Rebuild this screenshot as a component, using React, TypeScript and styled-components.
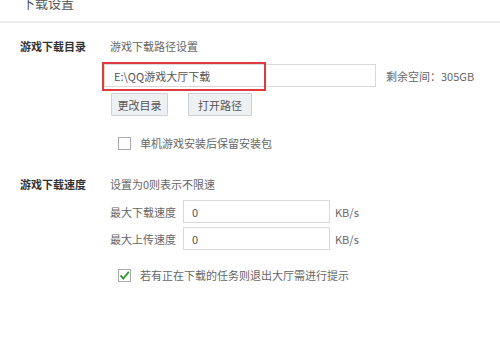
import React from "react";
import styled, { createGlobalStyle } from "styled-components";

const Global = createGlobalStyle`
  html, body { margin: 0; padding: 0; background: #fff; }
  body { font-family: "Noto Sans CJK SC", "Noto Sans", sans-serif; }
  * { box-sizing: border-box; }
`;

const Page = styled.div`
  width: 500px;
  height: 347px;
  background: #fff;
  overflow: hidden;
  color: #666;
  font-size: 11px;
`;

const Header = styled.div`
  height: 23px;
  border-bottom: 2px solid #ececec;
  padding-left: 22px;
  overflow: hidden;
`;

const Title = styled.div`
  font-size: 13px;
  line-height: 16px;
  margin-top: -5px;
  color: #555;
`;

const Section = styled.div<{ $top: number }>`
  display: grid;
  grid-template-columns: 90px 1fr;
  padding-left: 20px;
  padding-top: ${(p) => p.$top}px;
`;

const Label = styled.div`
  font-weight: bold;
  color: #333;
  line-height: 16px;
  font-size: 11px;
`;

const Column = styled.div`
  display: flex;
  flex-direction: column;
`;

const Line = styled.div`
  line-height: 16px;
  color: #666;
`;

const PathRow = styled.div`
  display: flex;
  align-items: center;
  margin-top: 10px;
  margin-left: -6px;
`;

const PathBox = styled.div`
  position: relative;
  width: 272px;
  height: 23px;
  border: 1px solid #d9d9d9;
  display: flex;
  align-items: center;
  padding-left: 9px;
  color: #555;
`;

const Highlight = styled.div`
  position: absolute;
  left: -3px;
  top: -3px;
  width: 164px;
  height: 29px;
  border: 2px solid #de3a3f;
  pointer-events: none;
`;

const Side = styled.span`
  margin-left: 10px;
  color: #666;
`;

const Buttons = styled.div`
  display: flex;
  gap: 20px;
  margin-top: 6px;
  margin-left: 1px;
`;

const Button = styled.div<{ $w: number }>`
  width: ${(p) => p.$w}px;
  height: 23px;
  border: 1px solid #cdd1d6;
  background: #eef1f4;
  border-radius: 1px;
  display: flex;
  align-items: center;
  justify-content: center;
  color: #555;
`;

const CheckRow = styled.div<{ $top: number }>`
  display: flex;
  align-items: center;
  gap: 9px;
  margin-top: ${(p) => p.$top}px;
  margin-left: 8px;
  line-height: 16px;
`;

const Box = styled.div`
  width: 13px;
  height: 13px;
  border: 1px solid #a9a9a9;
  background: #fff;
  display: flex;
  align-items: center;
  justify-content: center;
`;

const SpeedRow = styled.div<{ $top: number }>`
  display: flex;
  align-items: center;
  margin-top: ${(p) => p.$top}px;
`;

const SpeedLabel = styled.span`
  width: 73px;
  color: #666;
`;

const SpeedInput = styled.div`
  width: 147px;
  height: 23px;
  border: 1px solid #d9d9d9;
  display: flex;
  align-items: center;
  padding-left: 8px;
  color: #555;
`;

const Unit = styled.span`
  margin-left: 5px;
  color: #666;
`;

const Check = () => (
  <svg width="11" height="11" viewBox="0 0 11 11">
    <path d="M1.5 5.5 L4.3 8.5 L9.8 1.8" fill="none" stroke="#3c9a3a" strokeWidth="1.9" />
  </svg>
);

export default function App() {
  return (
    <Page>
      <Global />
      <Header>
        <Title>下载设置</Title>
      </Header>
      <Section $top={15}>
        <Label>游戏下载目录</Label>
        <Column>
          <Line>游戏下载路径设置</Line>
          <PathRow>
            <PathBox>
              E:\QQ游戏大厅下载
              <Highlight />
            </PathBox>
            <Side>剩余空间：305GB</Side>
          </PathRow>
          <Buttons>
            <Button $w={57}>更改目录</Button>
            <Button $w={64}>打开路径</Button>
          </Buttons>
          <CheckRow $top={19}>
            <Box />
            <span>单机游戏安装后保留安装包</span>
          </CheckRow>
        </Column>
      </Section>
      <Section $top={25}>
        <Label>游戏下载速度</Label>
        <Column>
          <Line>设置为0则表示不限速</Line>
          <SpeedRow $top={8}>
            <SpeedLabel>最大下载速度</SpeedLabel>
            <SpeedInput>0</SpeedInput>
            <Unit>KB/s</Unit>
          </SpeedRow>
          <SpeedRow $top={4}>
            <SpeedLabel>最大上传速度</SpeedLabel>
            <SpeedInput>0</SpeedInput>
            <Unit>KB/s</Unit>
          </SpeedRow>
          <CheckRow $top={17}>
            <Box>
              <Check />
            </Box>
            <span>若有正在下载的任务则退出大厅需进行提示</span>
          </CheckRow>
        </Column>
      </Section>
    </Page>
  );
}
